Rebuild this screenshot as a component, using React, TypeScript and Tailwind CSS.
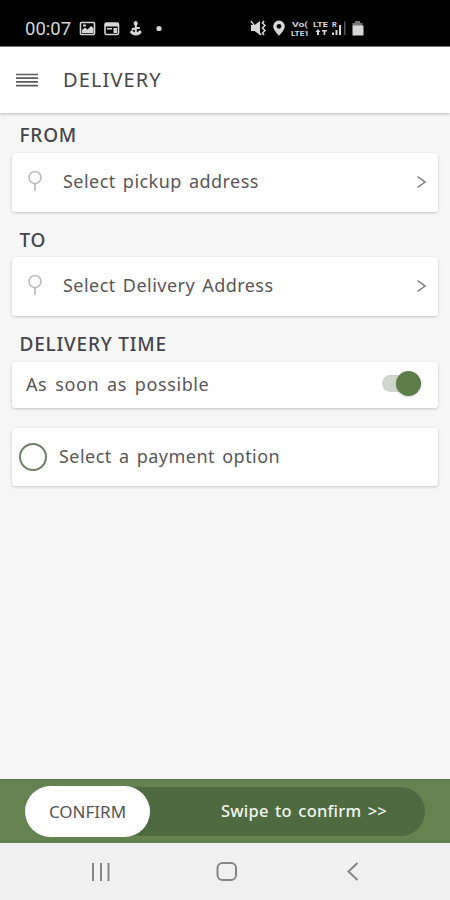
import React from "react";

function StatusBar() {
  return (
    <div className="h-[47px] shrink-0 bg-black text-[#d6d6d6] flex items-start border-b border-[#777]">
      <div className="ml-[25px] mt-[18px] w-[46px] whitespace-nowrap font-['Roboto',sans-serif] text-[18.5px] leading-[22px]">00:07</div>
      <svg className="ml-[8px] mt-[20px]" width="85" height="17" viewBox="0 0 85 17" fill="#d6d6d6">
        <rect x="1.5" y="2.5" width="14" height="12" rx="1" fill="none" stroke="#d6d6d6" strokeWidth="1.6" />
        <path d="M3 13V10l3-2.5 2.5 2L12 6l2.5 2v5zM4 4.5h3v2H4z" />
        <rect x="26" y="3" width="13.5" height="11.5" rx="1.5" fill="none" stroke="#d6d6d6" strokeWidth="1.6" />
        <path d="M26 3h14v3.5H26zM28 8h5v1.5h-5zM34.500 8h3.500v5h-3.500z" />
        <path d="M56.500 1a2.500 2.500 0 0 1 1.300 4.500V7h3v2h-3v3q2.500-.3 3.200-2l1.800 2q-1.700 3.300-6 3.500-4.300-.2-6-3.500l2-2q1 2 3 2.300V9.800l-3 .7V8.200l3-.7V5.500A2.500 2.500 0 0 1 56.500 1z" />
        <circle cx="80" cy="8.500" r="2.600" />
      </svg>
      <svg className="ml-[85px] mt-[19px]" width="118" height="19" viewBox="0 0 118 19" fill="#d6d6d6">
        <path d="M2 6h3.500L11 2v14l-5.500-4H2z" />
        <path d="M2 2l10 14" stroke="#d6d6d6" strokeWidth="1.300" />
        <path d="M15 2l-1.500 2L16 6.500 13.500 9l2.500 2.500-2.500 2.500 1.500 2" fill="none" stroke="#d6d6d6" strokeWidth="1.600" />
        <path fillRule="evenodd" d="M30 1.500a5.800 5.800 0 0 1 5.800 5.800c0 4-5.800 9.400-5.800 9.400s-5.800-5.400-5.800-9.400A5.800 5.800 0 0 1 30 1.500zm0 3.400a2.400 2.400 0 1 0 0 4.800 2.400 2.400 0 0 0 0-4.800z" />
        <g fontFamily="Roboto, sans-serif" fontWeight="700" fontSize="7.500">
          <text x="43" y="7.500" textLength="16" lengthAdjust="spacingAndGlyphs">Vo(</text>
          <text x="42" y="16.500" textLength="18" lengthAdjust="spacingAndGlyphs">LTE1</text>
          <text x="64" y="7.500" textLength="15" lengthAdjust="spacingAndGlyphs">LTE</text>
          <text x="83" y="7.500">R</text>
        </g>
        <path d="M69 10l2.500 3H70v3h-2v-3h-1.500zM73 11h5v1.500h-1.700V16h-1.700v-3.500H73zM83 13.500h2V16h-2zM86.500 11h2v5h-2zM90 6h2v10h-2z" />
        <path d="M95 2.500h1.500V16H95z" fill="#555" />
        <path d="M106 2h5v2h2.500v3h-10V4h2.500z" fill="#777" />
        <path d="M103.500 6.500h11v10h-11z" />
      </svg>
    </div>
  );
}

function SectionTitle({ children }: { children: React.ReactNode }) {
  return <h2 className="ml-[19.5px] h-[24px] whitespace-nowrap text-[19px] leading-[24px] tracking-[0.8px] font-medium text-[#45454b]">{children}</h2>;
}

const card = "mx-[12px] flex items-center rounded-[3px] bg-white shadow-[0_1px_3px_rgba(0,0,0,0.2)]";

function AddressCard({ label }: { label: string }) {
  return (
    <div className={`${card} h-[59px]`}>
      <svg className="ml-[15px] mb-[3px]" width="16" height="22" viewBox="0 0 16 22" fill="none" stroke="#bdbdbd" strokeWidth="1.7">
        <circle cx="8" cy="7.500" r="6" />
        <path d="M8 13.500V21" />
      </svg>
      <span className="mb-[3px] ml-[20px] whitespace-nowrap text-[18px] leading-[24px] tracking-[0.46px] [word-spacing:2px] text-[#57575a]">{label}</span>
      <svg className="mb-[1px] ml-auto mr-[11px]" width="11" height="14" viewBox="0 0 11 14" fill="none" stroke="#777" strokeWidth="1.500">
        <path d="M1.500 1.500L9 7l-7.500 5.500" />
      </svg>
    </div>
  );
}

export default function App() {
  return (
    <div className="flex h-[900px] w-[450px] flex-col overflow-hidden bg-[#f6f6f6] font-['Noto_Sans','Open_Sans',sans-serif]">
      <StatusBar />
      <header className="flex h-[66px] shrink-0 items-center bg-white shadow-[0_1px_3px_rgba(0,0,0,0.25)]">
        <svg className="ml-[16px]" width="22" height="14" viewBox="0 0 22 14" stroke="#5c5c5f" strokeWidth="1.700">
          <path d="M0 1.500h22M0 5.200h22M0 8.900h22M0 12.600h22" />
        </svg>
        <h1 className="ml-[25px] whitespace-nowrap text-[20px] leading-[28px] tracking-[1.1px] text-[#47474b]">DELIVERY</h1>
      </header>
      <main className="flex grow flex-col pt-[10px]">
        <SectionTitle>FROM</SectionTitle>
        <div className="h-[6px]" />
        <AddressCard label="Select pickup address" />
        <div className="h-[16px]" />
        <SectionTitle>TO</SectionTitle>
        <div className="h-[5px]" />
        <AddressCard label="Select Delivery Address" />
        <div className="h-[16px]" />
        <SectionTitle>DELIVERY TIME</SectionTitle>
        <div className="h-[6px]" />
        <div className={`${card} h-[46px]`}>
          <span className="mb-[2px] ml-[14px] whitespace-nowrap text-[18px] leading-[24px] tracking-[0.6px] [word-spacing:2.6px] text-[#57575a]">As soon as possible</span>
          <div className="mb-[4px] ml-auto mr-[17px] flex h-[17px] w-[39px] items-center justify-end rounded-full bg-[#d0d5cd]">
            <div className="h-[25px] w-[25px] shrink-0 rounded-full bg-[#5c7f49] shadow-[0_1px_2px_rgba(0,0,0,0.2)]" />
          </div>
        </div>
        <div className="h-[20px]" />
        <div className={`${card} h-[58px]`}>
          <div className="mb-[1px] ml-[7px] h-[28px] w-[28px] rounded-full border-2 border-[#6f8066]" />
          <span className="mb-[2px] ml-[12px] whitespace-nowrap text-[18px] leading-[24px] tracking-[0.48px] [word-spacing:2px] text-[#57575a]">Select a payment option</span>
        </div>
      </main>
      <div className="flex h-[64px] shrink-0 items-center border-t border-[#55753f] bg-[#648350] px-[25px]">
        <div className="flex h-[49px] w-[401px] items-center rounded-full bg-[#4e6a40]">
          <div className="flex h-[51px] w-[125px] shrink-0 items-center justify-center rounded-full bg-white text-[17px] text-[#555] whitespace-nowrap">CONFIRM</div>
          <span className="ml-[71px] whitespace-nowrap text-[16.5px] font-medium tracking-[0.2px] [word-spacing:2px] text-[#f1f5ee]">Swipe to confirm &gt;&gt;</span>
        </div>
      </div>
      <nav className="flex h-[57px] shrink-0 items-center bg-[#f0f0f0]">
        <svg width="450" height="57" viewBox="0 0 450 57" fill="none" stroke="#858585" strokeWidth="2">
          <path d="M93 20v18M101 20v18M108.500 20v18M357.500 20l-9 8.500 9 8.500" />
          <rect x="217.500" y="20" width="18.500" height="17" rx="5" />
        </svg>
      </nav>
    </div>
  );
}
